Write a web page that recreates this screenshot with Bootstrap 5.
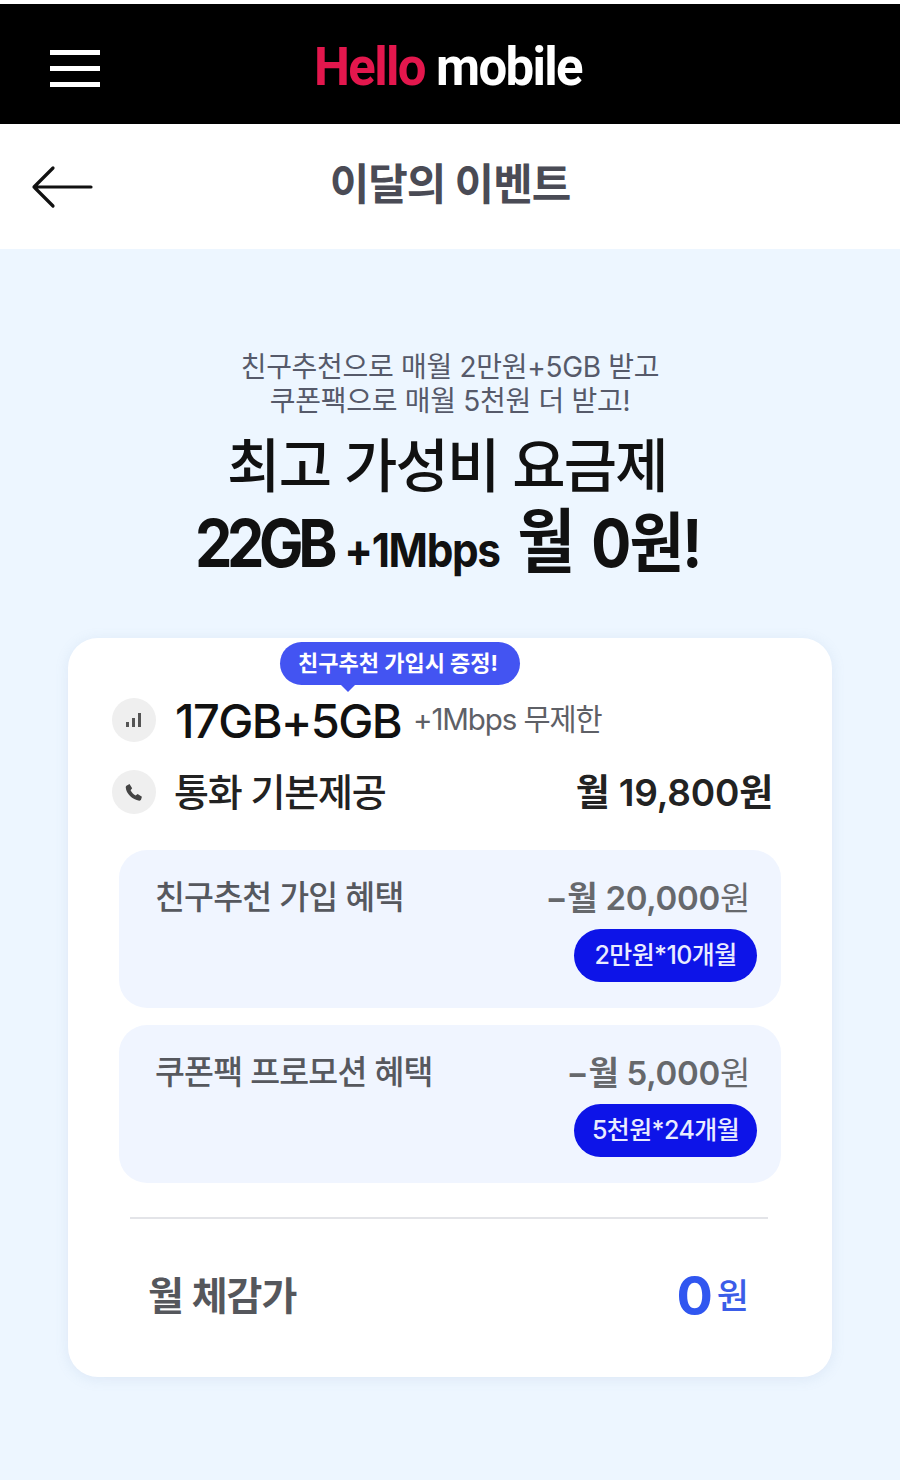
<!DOCTYPE html>
<html lang="ko">
<head>
<meta charset="utf-8">
<title>이달의 이벤트</title>
<link href="https://cdn.jsdelivr.net/npm/bootstrap@5.3.0/dist/css/bootstrap.min.css" rel="stylesheet">
<style>
html,body{margin:0;height:1480px;overflow:hidden}
body{font-family:"Inter","Noto Sans CJK KR",sans-serif;background:#edf6ff;color:#111}
.topline{height:4px;background:#fff}
.brandbar{height:120px;background:#000;padding-left:50px}
.burger{width:50px;display:flex;flex-direction:column;gap:11.500px;margin-top:9px}
.burger span{display:block;height:4.500px;background:#fff}
.brandname{font-family:"Roboto","Liberation Sans",sans-serif;font-weight:700;font-size:53px;letter-spacing:-1.700px;line-height:1;color:#fff;transform:scaleX(.96);margin:6px 4px 0 0}
.brandname b{color:#e3174d;font-weight:700}
.titlebar{height:125px;background:#fff;padding-bottom:4px}
.backlink{position:absolute;left:31px;top:41px;line-height:0}
.pagetitle{font-size:43px;font-weight:700;color:#4a4b55;letter-spacing:-1px;margin:0;line-height:1.2}
.hero{padding-top:101px}
.hero-sub{font-size:28px;line-height:34px;color:#565a6a;letter-spacing:-.3px;font-weight:400}
.hero-main{font-size:58px;line-height:70px;margin-top:13px;padding-right:6px;letter-spacing:-1.800px;font-weight:500;color:#111}
.hero-price{height:70px;font-size:66px;line-height:70px;font-weight:700;margin-top:6px;padding-right:5px;color:#111;letter-spacing:-2px;transform:scaleX(.9)}
.hero-price .num{letter-spacing:-6px}
.hero-price .mid{font-size:47px;letter-spacing:-1.500px}
.hero-price .won{font-size:70px;line-height:1;margin:0 6px}
.plan{width:764px;height:739px;margin:61px auto 0;background:#fff;border-radius:30px;box-shadow:0 2px 14px rgba(120,150,190,.14);padding:60px 50px 0 44px;position:relative}
.bubble{position:absolute;left:212px;top:4px;height:43px;width:240px;border-radius:22px;background:#4354f2;color:#fff;font-size:22px;font-weight:700;letter-spacing:0;padding-right:4px;display:flex;align-items:center;justify-content:center}
.bubble::after{content:"";position:absolute;left:60px;bottom:-7px;border-left:8px solid transparent;border-right:8px solid transparent;border-top:8px solid #4354f2}
.roundicon{width:44px;height:44px;border-radius:50%;background:#efefef;flex:none}
.planrow{height:44px}
.planrow-next{margin-top:28px}
.gb{font-size:47px;font-weight:500;letter-spacing:-1.600px;line-height:1;color:#111;margin-left:19px}
.speed{font-size:29.500px;color:#5e6066;letter-spacing:-1.100px;line-height:1;margin-left:12px}
.voice{font-size:38px;font-weight:500;letter-spacing:-1.200px;line-height:1;color:#222;margin-left:18px}
.fee{font-size:37px;font-weight:600;letter-spacing:-.2px;line-height:1;color:#222;margin-left:auto;margin-right:9px}
.benefit{width:662px;height:158px;background:#f0f5ff;border-radius:28px;margin:17px 0 0 7px;padding:26px 24px 0 36px}
.benefit-first{margin-top:36px}
.bname{font-size:32.500px;font-weight:500;color:#56585e;letter-spacing:-.8px;line-height:44px}
.bvalue{font-size:33px;font-weight:600;color:#66686c;letter-spacing:-.3px;line-height:44px;margin-right:7px}
.bvalue em{font-style:normal;font-weight:400}
.period{width:183px;height:53px;border-radius:27px;background:#0d14e8;color:#e9ecff;font-size:25px;font-weight:500;letter-spacing:-.6px;margin-top:9px}
.rule{width:638px;margin:34px 0 0 18px;border-top:2px solid #e3e4e8}
.net{margin:47px 33px 0 36px;height:60px}
.netlabel{font-size:39px;font-weight:600;color:#55575c;letter-spacing:-1px}
.netzero{font-size:54px;font-weight:700;color:#3056f0;line-height:1}
.netunit{font-size:35px;color:#3b5de8;margin-left:4px;font-weight:500}
</style>
</head>
<body>
<div class="topline"></div>
<header class="brandbar d-flex align-items-center position-relative">
  <div class="burger"><span></span><span></span><span></span></div>
  <div class="position-absolute top-50 start-50 translate-middle">
    <div class="brandname text-nowrap"><b>Hello</b> mobile</div>
  </div>
</header>
<div class="titlebar position-relative d-flex align-items-center justify-content-center">
  <span class="backlink"><svg width="64" height="44" viewBox="0 0 64 44" fill="none" stroke="#111" stroke-width="3.2" stroke-linecap="round" stroke-linejoin="round"><path d="M3 22H60M22 3 3 22 22 41"/></svg></span>
  <h1 class="pagetitle">이달의 이벤트</h1>
</div>
<main>
  <section class="hero text-center">
    <div class="hero-sub">친구추천으로 매월 2만원+5GB 받고<br>쿠폰팩으로 매월 5천원 더 받고!</div>
    <div class="hero-main">최고 가성비 요금제</div>
    <div class="hero-price"><span class="num">22GB</span> <span class="mid">+1Mbps</span> <span class="won">월</span> 0원!</div>
  </section>
  <section class="plan">
    <div class="bubble">친구추천 가입시 증정!</div>
    <div class="planrow d-flex align-items-center">
      <span class="roundicon d-flex align-items-center justify-content-center"><svg width="18" height="16" viewBox="0 0 18 16" fill="#555"><rect x="1" y="10" width="3" height="5"/><rect x="7" y="6" width="3" height="9"/><rect x="13" y="1" width="3" height="14"/></svg></span>
      <span class="gb text-nowrap">17GB+5GB</span>
      <span class="speed text-nowrap">+1Mbps 무제한</span>
    </div>
    <div class="planrow planrow-next d-flex align-items-center">
      <span class="roundicon d-flex align-items-center justify-content-center"><svg width="20" height="20" viewBox="0 0 24 24" fill="#444"><path d="M6.600 2.500 9.800 7.500 7.900 10c1.200 2.700 3.300 4.900 6 6.200l2.500-1.900 5.100 3.300-1 3.400c-.3.900-1.200 1.500-2.200 1.400C10.200 21.500 2.500 13.600 2.100 6.600c0-1 .5-1.900 1.400-2.300z"/></svg></span>
      <span class="voice text-nowrap">통화 기본제공</span>
      <span class="fee text-nowrap">월 19,800원</span>
    </div>
    <div class="benefit benefit-first">
      <div class="d-flex justify-content-between"><span class="bname">친구추천 가입 혜택</span><span class="bvalue">−월 20,000<em>원</em></span></div>
      <div class="d-flex justify-content-end"><span class="period d-flex align-items-center justify-content-center">2만원*10개월</span></div>
    </div>
    <div class="benefit">
      <div class="d-flex justify-content-between"><span class="bname">쿠폰팩 프로모션 혜택</span><span class="bvalue">−월 5,000<em>원</em></span></div>
      <div class="d-flex justify-content-end"><span class="period d-flex align-items-center justify-content-center">5천원*24개월</span></div>
    </div>
    <div class="rule"></div>
    <div class="net d-flex align-items-center justify-content-between">
      <span class="netlabel">월 체감가</span>
      <span class="d-flex align-items-center"><span class="netzero">0</span><span class="netunit">원</span></span>
    </div>
  </section>
</main>
</body>
</html>
